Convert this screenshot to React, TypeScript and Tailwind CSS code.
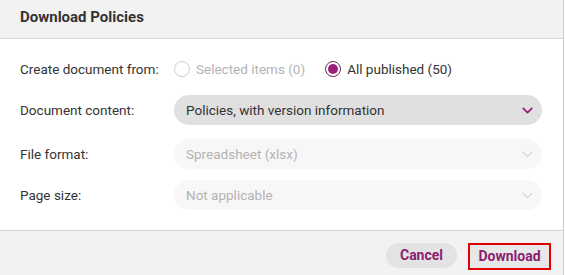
import { ChevronDown } from 'lucide-react';

const font = { fontFamily: 'Roboto, "Liberation Sans", sans-serif' };

function Select( { value, active }: { value: string; active?: boolean } ) {
	return (
		<div
			className={ `flex items-center justify-between h-[30px] w-[368px] rounded-full pl-3 pr-[6px] text-[13.5px] ${
				active ? 'bg-[#e0e0e0] text-[#333]' : 'bg-[#f7f7f7] text-[#b3b3b3]'
			}` }
		>
			<span>{ value }</span>
			<ChevronDown
				size={ 17 }
				strokeWidth={ active ? 2.6 : 1.6 }
				className={ active ? 'text-[#95217a]' : 'text-[#cfcfcf]' }
			/>
		</div>
	);
}

function Row( { label, children, className }: { label: string; children: React.ReactNode; className?: string } ) {
	return (
		<div className={ `flex items-center h-[30px] ${ className || '' }` }>
			<div className="w-[154px] text-[13.5px] text-[#333]">{ label }</div>
			{ children }
		</div>
	);
}

export default function App() {
	return (
		<div className="w-[565px] h-[275px] bg-white" style={ font }>
			<div className="w-[564px] h-[275px] border-r border-[#cccccc] flex flex-col">
				<header className="h-[39px] bg-[#f2f2f2] border-b border-[#d6d6d6] flex items-center px-5">
					<h1 className="text-[15px] font-bold text-[#333] -mt-[4px]">Download Policies</h1>
				</header>
				<div className="flex-1 px-5 pt-[15px]">
					<Row label="Create document from:">
						<label className="flex items-center gap-[6px] text-[13.5px] text-[#b3b3b3]">
							<span className="w-[16px] h-[16px] rounded-full border border-[#d0d0d0] bg-white" />
							Selected items (0)
						</label>
						<label className="flex items-center gap-[6px] text-[13.5px] text-[#333] ml-[20px]">
							<span className="w-[16px] h-[16px] rounded-full border border-[#6b2a5c] bg-white flex items-center justify-center">
								<span className="w-[10px] h-[10px] rounded-full bg-[#9c1f7c]" />
							</span>
							All published (50)
						</label>
					</Row>
					<Row label="Document content:" className="mt-[11px]">
						<Select value="Policies, with version information" active />
					</Row>
					<Row label="File format:" className="mt-[14px]">
						<Select value="Spreadsheet (xlsx)" />
					</Row>
					<Row label="Page size:" className="mt-[11px]">
						<Select value="Not applicable" />
					</Row>
				</div>
				<footer className="h-[45px] bg-[#f2f2f2] border-t border-[#d6d6d6] flex items-center justify-end pr-[12px] gap-[11px] pt-[5px]">
					<button className="h-[25px] w-[71px] rounded-full bg-[#e3e3e3] text-[14px] font-bold text-[#8a1f6e]">
						Cancel
					</button>
					<button className="h-[27px] w-[83px] border-2 border-[#e00000] bg-[#e8e8e8] text-[14px] font-bold text-[#8a1f6e] mt-[1px]">
						Download
					</button>
				</footer>
			</div>
		</div>
	);
}
